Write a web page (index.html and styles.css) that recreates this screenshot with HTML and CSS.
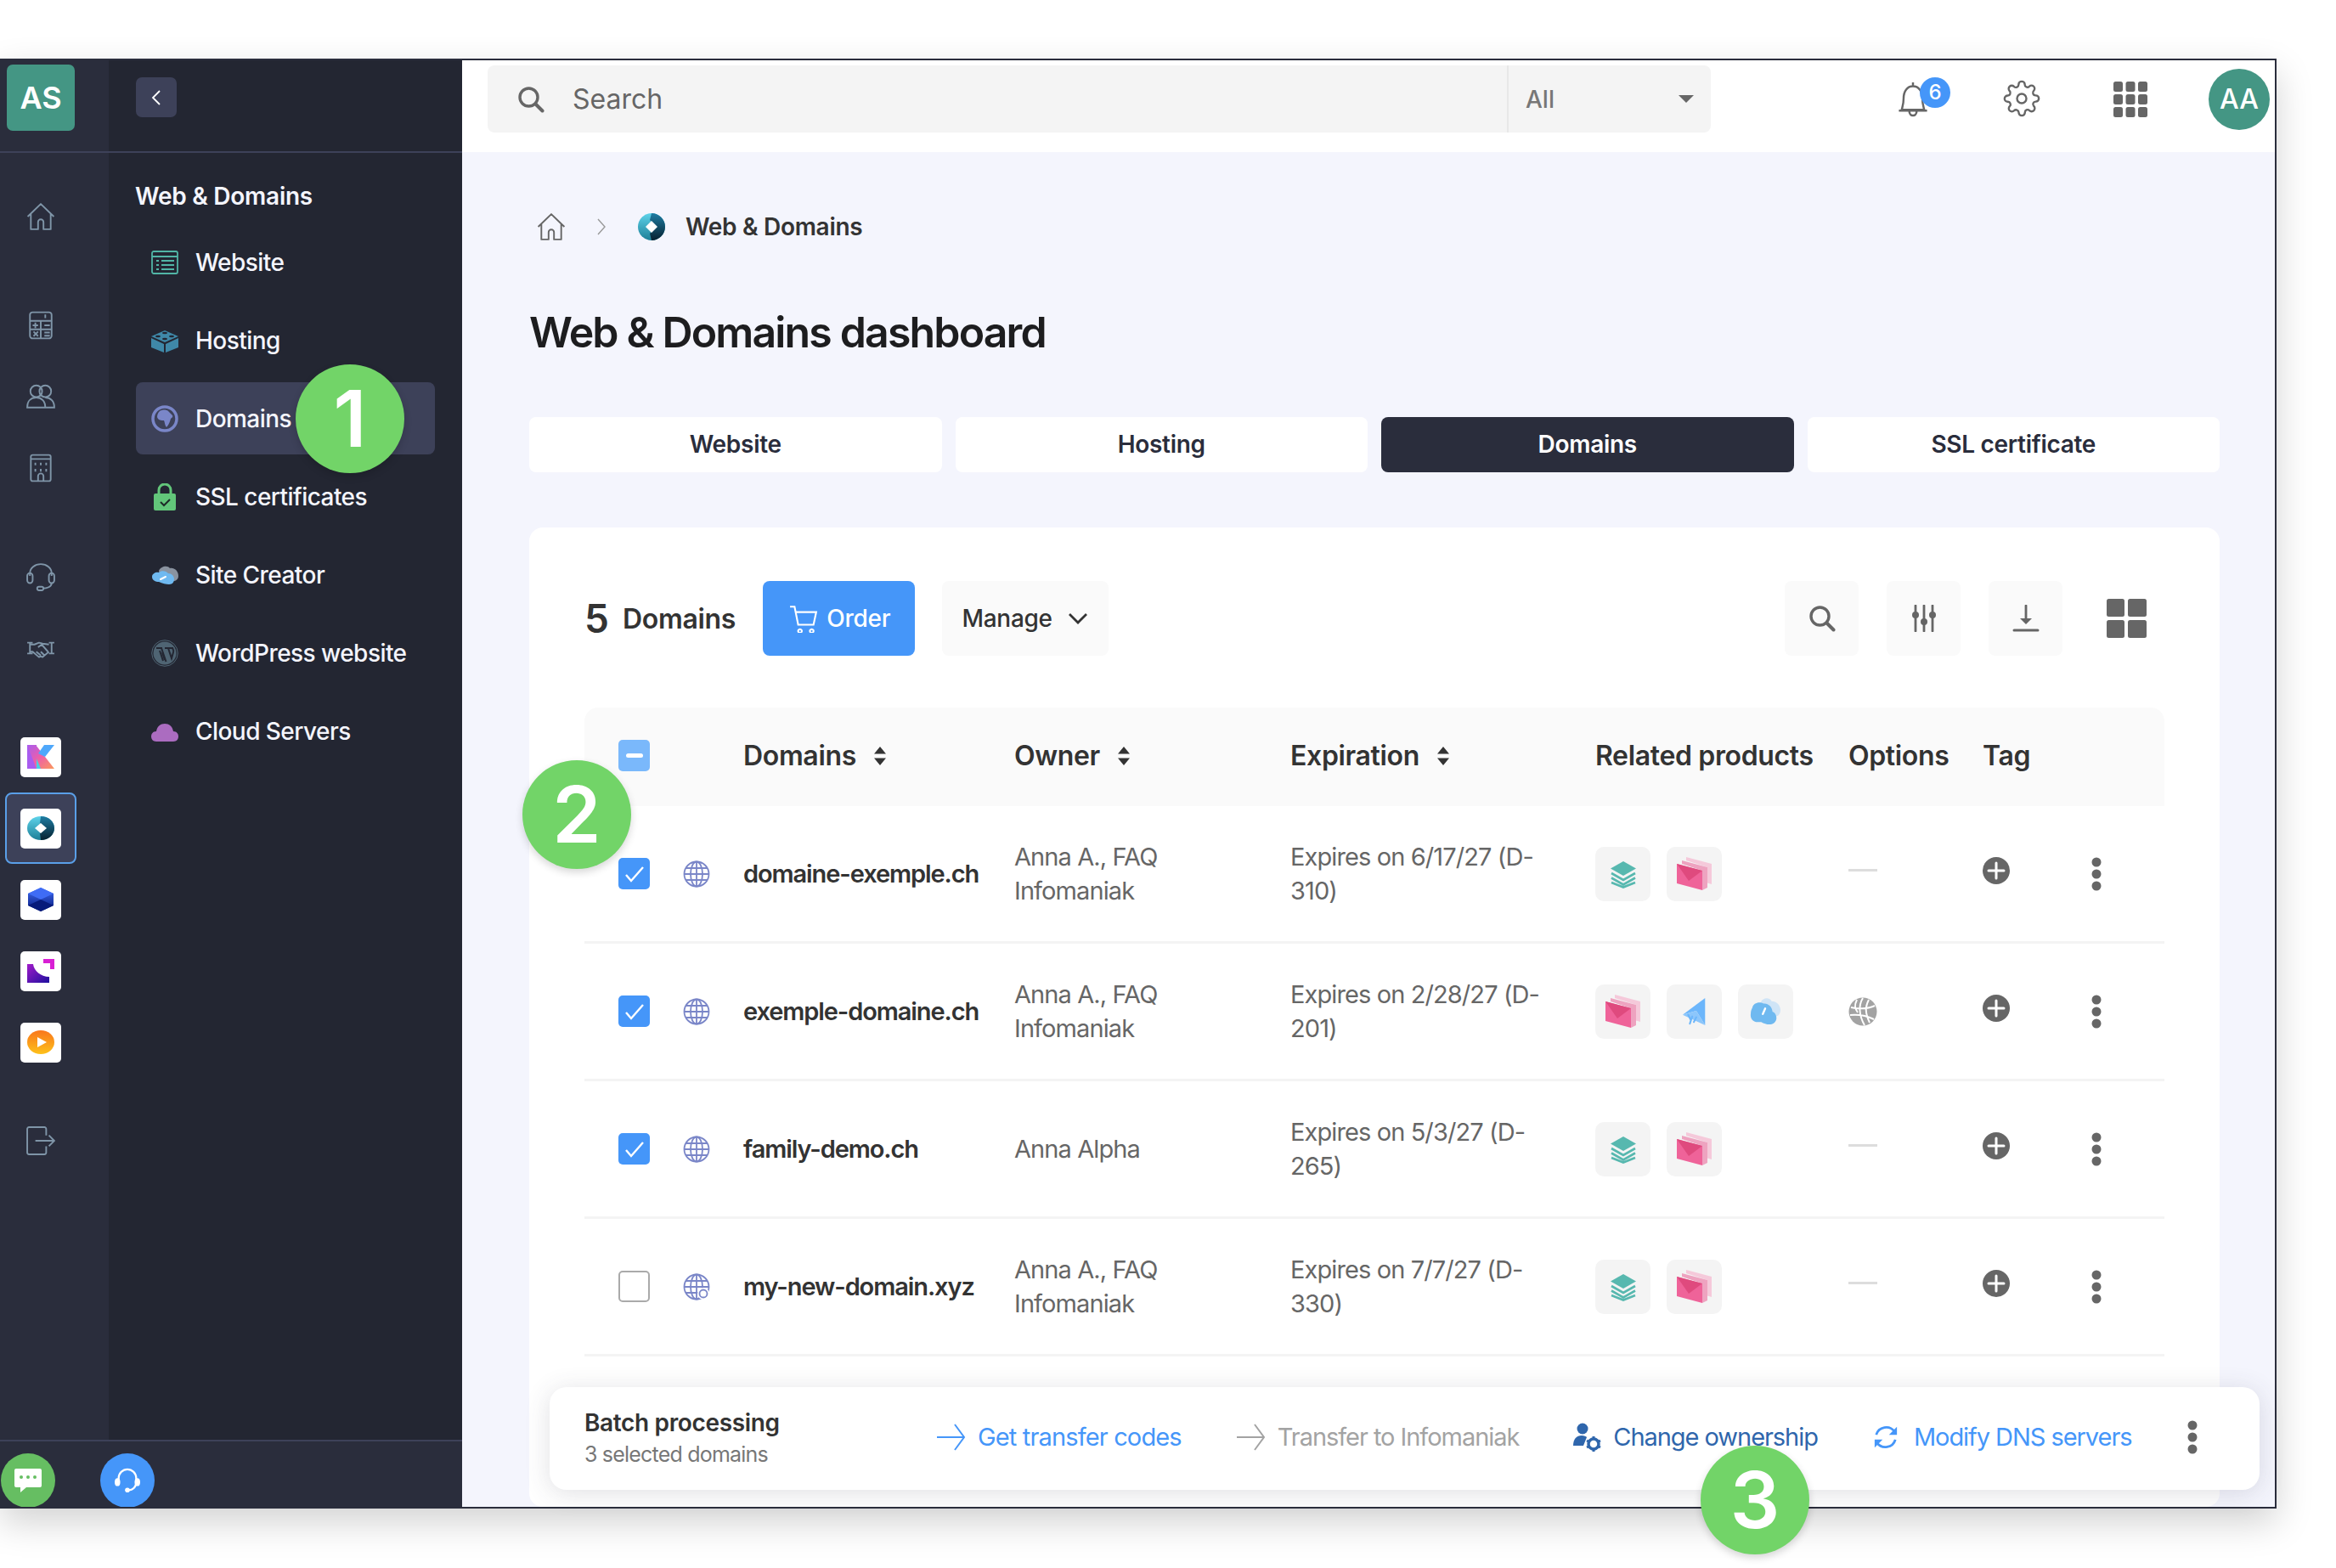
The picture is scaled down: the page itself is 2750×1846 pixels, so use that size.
FILE: index.html

```html
<!DOCTYPE html>
<html>
<head>
  <title>Web &amp; Domains dashboard</title>
  <link rel="stylesheet" href="styles.css">
</head>
<body>

<!-- shared icons -->
<svg class="defs">
  <defs>
    <linearGradient id="gWeb" x1="0" y1="0" x2="0" y2="1"><stop offset="0" stop-color="#5ed3ea"/><stop offset="1" stop-color="#1c7f97"/></linearGradient>
    <linearGradient id="gWebDark" x1="0" y1="0" x2="0" y2="1"><stop offset="0" stop-color="#1f7da3"/><stop offset="1" stop-color="#06202f"/></linearGradient>
    <linearGradient id="gKuma" x1="0" y1="0" x2="1" y2="1"><stop offset="0" stop-color="#a95cf0"/><stop offset=".5" stop-color="#ee5fa7"/><stop offset="1" stop-color="#fb9a5b"/></linearGradient>
    <linearGradient id="gCube" x1="0" y1="0" x2="0" y2="1"><stop offset="0" stop-color="#3f6cf5"/><stop offset="1" stop-color="#071a7a"/></linearGradient>
    <linearGradient id="gSwiss" x1="0" y1="0" x2="1" y2="1"><stop offset="0" stop-color="#a11bc9"/><stop offset="1" stop-color="#1d0f9e"/></linearGradient>
    <linearGradient id="gOrange" x1="0" y1="0" x2="0" y2="1"><stop offset="0" stop-color="#f9761c"/><stop offset="1" stop-color="#fdc11a"/></linearGradient>

    <symbol id="i-home" viewBox="0 0 32 32"><path d="M1.500 16 16 2l14.500 14M5 13v17h8v-8a3 3 0 0 1 6 0v8h8V13" fill="none" stroke="currentColor" stroke-width="1.800" stroke-linejoin="round"/></symbol>
    <symbol id="i-search" viewBox="0 0 32 32"><circle cx="13.500" cy="13.500" r="10.500" fill="none" stroke="currentColor" stroke-width="3.400"/><path d="m21.500 21.500 8 8" stroke="currentColor" stroke-width="4" stroke-linecap="round"/></symbol>
    <symbol id="i-globe" viewBox="0 0 32 32"><g fill="none" stroke="currentColor" stroke-width="1.800"><circle cx="16" cy="16" r="14.500"/><ellipse cx="16" cy="16" rx="7" ry="14.500"/><path d="M16 1.500v29M1.500 16h29M3.500 9h25M3.500 23h25"/></g></symbol>
    <symbol id="i-kebab" viewBox="0 0 12 40"><circle cx="6" cy="6" r="5.500"/><circle cx="6" cy="20" r="5.500"/><circle cx="6" cy="34" r="5.500"/></symbol>
    <symbol id="i-plus" viewBox="0 0 32 32"><circle cx="16" cy="16" r="16"/><path d="M16 7v18M7 16h18" stroke="#fff" stroke-width="3" stroke-linecap="round"/></symbol>
    <symbol id="i-sort" viewBox="0 0 16 24"><path d="M8 1l7 8.500H1zM8 23l-7-8.500h14z"/></symbol>
    <symbol id="i-arrow" viewBox="0 0 34 32"><path d="M0 16h32M21 1l11 15-11 15" fill="none" stroke="currentColor" stroke-width="2"/></symbol>
    <symbol id="i-stack" viewBox="0 0 32 32"><path d="M16 1l15 8.500-15 8.500-15-8.500z" fill="#57b8af"/><path d="M2 15l14 8 14-8M2 20.500l14 8 14-8M2 26l14 5.500L30 26" fill="none" stroke="#57b8af" stroke-width="2.600"/></symbol>
    <symbol id="i-pink" viewBox="0 0 41 39"><path d="M11 0l30 8v24l-5-1.500V12L11 4z" fill="#f5c9da"/><path d="M6 4l30 8v24l-6 3V16L6 8z" fill="#eea3c0"/><path d="M0 8l30 8v23L0 31z" fill="#ef6399"/><path d="M0 8l30 8-16 12z" fill="#df4a7e"/></symbol>
    <symbol id="i-send" viewBox="0 0 32 36"><path d="M29 1v34L18 17 1 22z" fill="#6cb6fb"/><path d="M1 22l17-5 11 18z" fill="#8cc6fb"/><path d="M8 22l3 6M13 24l-3 9M18 25l-3 6" stroke="#6cb6fb" stroke-width="2.200" stroke-linecap="round"/></symbol>
    <symbol id="i-cloud" viewBox="0 0 40 36"><path d="M14 5c3-5 11-5 13 0 6 0 11 5 11 11s-4 9-10 9H14z" fill="#cfe4f6"/><path d="M3 13c1-6 9-8 14-5 5-1 11 4 11 10 3 1 5 4 5 8s-3 8-9 8c-3 0-7-1-10-3H10C3 31 0 26 1 20c0-3 1-5 2-7z" fill="#6fb9f0"/><path d="M16 21l3-7" stroke="#fff" stroke-width="2.500" stroke-linecap="round"/></symbol>
  </defs>
</svg>

<div class="window">

  <aside class="sidebar">
    <div class="rail-head"><div class="as-tile">AS</div></div>
    <div class="panel-head">
      <button class="back-btn">
        <svg class="icon-chev" viewBox="0 0 12 20"><path d="M10 2 2 10l8 8" fill="none" stroke="#fff" stroke-width="1.800"/></svg>
      </button>
    </div>

    <nav class="rail">
      <a class="rail-item rail-home"><svg class="rail-icon"><use href="#i-home"/></svg></a>

      <a class="rail-item group-start">
        <svg class="rail-icon" viewBox="0 0 32 32"><g fill="none" stroke="currentColor" stroke-width="1.800"><rect x="4" y="1.500" width="24" height="29" rx="3"/><path d="M4 11h24M16 11v19.500M4 20.500h24M21 4v4M7 16h6M10 13v6M20 16h6M8 23l5 5M13 23l-5 5M20 24h6M20 27.500h6"/></g></svg>
      </a>
      <a class="rail-item">
        <svg class="rail-icon" viewBox="0 0 32 32"><g fill="none" stroke="currentColor" stroke-width="1.800"><circle cx="11" cy="10" r="6.500"/><circle cx="21" cy="10" r="6.500"/><path d="M1 28c0-7 4-11 10-11s10 4 10 11zM21 17c6 0 10 4 10 11h-10"/></g></svg>
      </a>
      <a class="rail-item">
        <svg class="rail-icon" viewBox="0 0 32 32"><g fill="none" stroke="currentColor" stroke-width="1.800"><rect x="5" y="1.500" width="22" height="29" rx="2"/><path d="M5 6h22M13 30.500V25a3 3 0 0 1 6 0v5.500M10 10v3M16 10v3M22 10v3M10 17v3M16 17v3M22 17v3"/></g></svg>
      </a>

      <a class="rail-item group-start">
        <svg class="rail-icon" viewBox="0 0 32 32"><g fill="none" stroke="currentColor" stroke-width="1.800"><path d="M4 15V12a12 10 0 0 1 24 0v3"/><rect x="1" y="12" width="6" height="11" rx="3"/><rect x="25" y="12" width="6" height="11" rx="3"/><path d="M28 23c0 4-5 6-10 6"/><rect x="12" y="27" width="7" height="4" rx="2"/></g></svg>
      </a>
      <a class="rail-item">
        <svg class="rail-icon" viewBox="0 0 32 32"><g fill="none" stroke="currentColor" stroke-width="1.800" stroke-linejoin="round"><path d="M1 10h6M1 22h6M4 10v12M25 10h6M25 22h6M28 10v12M4 12h5l5-2 4 1 7 1M4 20h3l7 6 2-1 2 1 7-6M13 15l4-3 7 8M16 24l-5-4M20 24l-4-4"/></g></svg>
      </a>

      <a class="rail-item group-start">
        <span class="app-tile">
          <svg class="app-logo" viewBox="0 0 32 28"><path d="M0 0h11v28H0z" fill="#a95cf0"/><path d="M0 0l10 0 22 28H11z" fill="url(#gKuma)"/><path d="M13 10 20 0h12L21 14z" fill="#4fa8fb"/><path d="M11 16l5 12h-5z" fill="#49d0e2"/></svg>
        </span>
      </a>
      <a class="rail-item is-active">
        <span class="app-tile">
          <svg class="app-logo" viewBox="0 0 32 28"><ellipse cx="16" cy="14" rx="16" ry="14" fill="url(#gWeb)"/><path d="M16 0c9 0 16 6 16 14s-7 14-16 14l-1-8 6-6-6-6z" fill="url(#gWebDark)"/><path d="M16 8l7 6-7 6-7-6z" fill="#fff"/></svg>
        </span>
      </a>
      <a class="rail-item">
        <span class="app-tile">
          <svg class="app-logo" viewBox="0 0 32 28"><path d="M16 0l15 7v14l-15 7-15-7V7z" fill="url(#gCube)"/><path d="M16 14 1 7l15-7 15 7z" fill="#3f6cf5"/><path d="M16 14 1 21l15 7 15-7z" fill="#071a7a"/></svg>
        </span>
      </a>
      <a class="rail-item">
        <span class="app-tile">
          <svg class="app-logo" viewBox="0 0 32 28"><path d="M19 0h13v12h-5V5h-8z" fill="#d81fd4"/><path d="M0 6h7c1 8 9 15 19 15v7H0z" fill="url(#gSwiss)"/></svg>
        </span>
      </a>
      <a class="rail-item">
        <span class="app-tile">
          <svg class="app-logo" viewBox="0 0 32 28"><ellipse cx="16" cy="14" rx="16" ry="14" fill="url(#gOrange)"/><path d="M12 8l11 6-11 6z" fill="#fff"/></svg>
        </span>
      </a>

      <a class="rail-item rail-exit">
        <svg class="rail-icon" viewBox="0 0 32 32"><g fill="none" stroke="currentColor" stroke-width="1.800"><path d="M22 10V3a2 2 0 0 0-2-2H3a2 2 0 0 0-2 2v26a2 2 0 0 0 2 2h17a2 2 0 0 0 2-2v-7"/><path d="M10 16h21M25 10l6 6-6 6"/></g></svg>
      </a>
    </nav>

    <div class="panel">
      <div class="panel-title">Web &amp; Domains</div>
      <a class="panel-item">
        <svg class="panel-icon" viewBox="0 0 32 28"><g fill="none" stroke="#51b5a6" stroke-width="1.800"><rect x="1" y="1" width="30" height="26" rx="2"/><path d="M1 7h30M12 12h15M12 17h15M12 22h15M6 12h3M6 17h3M6 22h3"/></g></svg>
        <span>Website</span>
      </a>
      <a class="panel-item">
        <svg class="panel-icon" viewBox="0 0 32 28"><path d="M0 11l15 7v10L0 22zM32 11l-15 7v10l15-6z" fill="#3f88a8"/><path d="M0 9 16 2l16 7-16 7z" fill="#3f88a8"/><g fill="#232632"><ellipse cx="16" cy="5" rx="3" ry="1.300"/><ellipse cx="8" cy="9" rx="3" ry="1.300"/><ellipse cx="24" cy="9" rx="3" ry="1.300"/><ellipse cx="16" cy="12" rx="3" ry="1.300"/></g></svg>
        <span>Hosting</span>
      </a>
      <a class="panel-item is-active">
        <svg class="panel-icon" viewBox="0 0 32 32"><circle cx="16" cy="16" r="14" fill="none" stroke="#7a86c8" stroke-width="3.500"/><path d="M10 7c3-2 8-2 10 0l5 5c1 2-1 3-2 4-1 3-2 7-5 10-2-2-2-6-3-8-3 0-7 0-8-4 0-3 1-5 3-7z" fill="#7a86c8"/></svg>
        <span>Domains</span>
      </a>
      <a class="panel-item">
        <svg class="panel-icon panel-lock" viewBox="0 0 26 32"><path d="M6 14V8a7 7 0 0 1 14 0v6" fill="none" stroke="#62c67a" stroke-width="3"/><rect y="12" width="26" height="20" rx="2" fill="#62c67a"/><path d="M8 22l4 4 7-7" fill="none" stroke="#1d2b28" stroke-width="2"/></svg>
        <span>SSL certificates</span>
      </a>
      <a class="panel-item">
        <svg class="panel-icon" viewBox="0 0 32 24"><path d="M9 7c2-5 10-7 13-3 5-1 10 3 10 9 0 4-3 6-6 6H12z" fill="#8a93a0"/><path d="M1 14c0-4 5-6 8-5 3-3 9-2 11 1 4 0 7 3 7 7 0 3-2 6-6 6-3 0-8-1-12-3-4 0-8-2-8-6z" fill="#6fb9f0"/><path d="M11 17l6-3" stroke="#fff" stroke-width="2" stroke-linecap="round"/></svg>
        <span>Site Creator</span>
      </a>
      <a class="panel-item">
        <svg class="panel-icon" viewBox="0 0 32 32"><circle cx="16" cy="16" r="15.300" fill="none" stroke="#4f6473" stroke-width="1"/><circle cx="16" cy="16" r="13.500" fill="#4f6473"/><path d="M6 10h7M12 10l5.500 16M19 10h7M16 10h4M20 10l4 12 2-7c1-2 0-3-1-5M10 13l4 12M13 15l3 9" fill="none" stroke="#232632" stroke-width="2"/></svg>
        <span>WordPress website</span>
      </a>
      <a class="panel-item">
        <svg class="panel-icon" viewBox="0 0 32 24"><path d="M6 24c-4 0-6-3-6-6s2-6 6-6c1-6 5-9 10-9s9 3 10 9c4 0 6 3 6 6s-2 6-6 6z" fill="#ab6cc0"/></svg>
        <span>Cloud Servers</span>
      </a>
    </div>

    <div class="side-bottom">
      <span class="round-btn round-green">
        <svg viewBox="0 0 32 28" class="round-icon"><path d="M2 0h28a2 2 0 0 1 2 2v18a2 2 0 0 1-2 2H14L7 28v-6H2a2 2 0 0 1-2-2V2a2 2 0 0 1 2-2z" fill="#fff"/><g fill="#66be62"><circle cx="8" cy="10" r="2"/><circle cx="16" cy="10" r="2"/><circle cx="24" cy="10" r="2"/></g></svg>
      </span>
      <span class="round-btn round-blue">
        <svg viewBox="0 0 32 32" class="round-icon"><path d="M5 18V13a11 11 0 0 1 22 0v5M27 18c0 6-4 10-10 10" fill="none" stroke="#fff" stroke-width="2.400"/><ellipse cx="3.500" cy="18" rx="3.500" ry="5" fill="#fff"/><ellipse cx="28.500" cy="18" rx="3.500" ry="5" fill="#fff"/><circle cx="16" cy="28" r="3" fill="#fff"/></svg>
      </span>
    </div>
  </aside>

  <main class="main">
    <header class="topbar">
      <div class="searchbox">
        <div class="search-field">
          <svg class="search-icon"><use href="#i-search"/></svg>
          <span>Search</span>
        </div>
        <div class="search-scope">
          <span>All</span>
          <span class="caret"></span>
        </div>
      </div>
      <div class="top-icons">
        <span class="bell">
          <svg class="bell-icon" viewBox="0 0 32 38"><path d="M16 1v4M4 30c1-4 2-6 2-12 0-8 4-13 10-13s10 5 10 13c0 6 1 8 2 12zM1 31h30M12 31c0 7 8 7 8 0" fill="none" stroke="#666" stroke-width="2.200"/></svg>
          <span class="badge">6</span>
        </span>
        <svg class="gear" viewBox="0 0 24 24"><circle cx="12" cy="12" r="3" fill="none" stroke="#666" stroke-width="1.300"/><path fill="none" stroke="#666" stroke-width="1.300" d="M19.400 15a1.650 1.650 0 0 0 .33 1.820l.06.06a2 2 0 0 1 0 2.830 2 2 0 0 1-2.830 0l-.06-.06a1.650 1.650 0 0 0-1.820-.33 1.650 1.650 0 0 0-1 1.510V21a2 2 0 0 1-2 2 2 2 0 0 1-2-2v-.09A1.650 1.650 0 0 0 9 19.400a1.650 1.650 0 0 0-1.820.33l-.06.06a2 2 0 0 1-2.830 0 2 2 0 0 1 0-2.830l.06-.06a1.650 1.650 0 0 0 .33-1.820 1.650 1.650 0 0 0-1.510-1H3a2 2 0 0 1-2-2 2 2 0 0 1 2-2h.09A1.650 1.650 0 0 0 4.600 9a1.650 1.650 0 0 0-.33-1.820l-.06-.06a2 2 0 0 1 0-2.830 2 2 0 0 1 2.830 0l.06.06a1.650 1.650 0 0 0 1.820.33H9a1.650 1.650 0 0 0 1-1.510V3a2 2 0 0 1 2-2 2 2 0 0 1 2 2v.09a1.650 1.650 0 0 0 1 1.510 1.650 1.650 0 0 0 1.820-.33l.06-.06a2 2 0 0 1 2.830 0 2 2 0 0 1 0 2.830l-.06.06a1.650 1.650 0 0 0-.33 1.820V9a1.650 1.650 0 0 0 1.510 1H21a2 2 0 0 1 2 2 2 2 0 0 1-2 2h-.09a1.650 1.650 0 0 0-1.510 1z"/></svg>
        <svg class="apps" viewBox="0 0 40 42"><g fill="#666"><rect width="11" height="12" rx="2.500"/><rect x="14.500" width="11" height="12" rx="2.500"/><rect x="29" width="11" height="12" rx="2.500"/><rect y="15" width="11" height="12" rx="2.500"/><rect x="14.500" y="15" width="11" height="12" rx="2.500"/><rect x="29" y="15" width="11" height="12" rx="2.500"/><rect y="30" width="11" height="12" rx="2.500"/><rect x="14.500" y="30" width="11" height="12" rx="2.500"/><rect x="29" y="30" width="11" height="12" rx="2.500"/></g></svg>
        <span class="avatar">AA</span>
      </div>
    </header>

    <section class="content">
      <div class="crumbs">
        <svg class="crumb-home"><use href="#i-home"/></svg>
        <svg class="crumb-sep" viewBox="0 0 10 20"><path d="M1 1l8 9-8 9" fill="none" stroke="#999" stroke-width="1.400"/></svg>
        <svg class="crumb-logo" viewBox="0 0 32 32"><circle cx="16" cy="16" r="16" fill="url(#gWeb)"/><path d="M16 0a16 16 0 0 1 0 32l-2-8 8-8-8-8z" fill="url(#gWebDark)"/><path d="M16 9l7 7-7 7-7-7z" fill="#fff"/></svg>
        <span class="crumb-text">Web &amp; Domains</span>
      </div>

      <h1 class="page-title">Web &amp; Domains dashboard</h1>

      <div class="tabs">
        <a class="tab">Website</a>
        <a class="tab">Hosting</a>
        <a class="tab is-active">Domains</a>
        <a class="tab">SSL certificate</a>
      </div>

      <div class="card">
        <div class="toolbar">
          <span class="count">5</span>
          <span class="count-label">Domains</span>
          <button class="btn-order">
            <svg class="cart" viewBox="0 0 32 32"><path d="M1 3h5l4 20h17l3-14H7M12 28a2 2 0 1 0 .01 0M25 28a2 2 0 1 0 .01 0" fill="none" stroke="#fff" stroke-width="2"/></svg>
            Order
          </button>
          <button class="btn-manage">
            Manage
            <svg class="manage-chev" viewBox="0 0 24 14"><path d="M2 2l10 10L22 2" fill="none" stroke="#333" stroke-width="2.800"/></svg>
          </button>
          <div class="tool-group">
            <span class="tool"><svg class="tool-icon"><use href="#i-search"/></svg></span>
            <span class="tool">
              <svg class="tool-icon" viewBox="0 0 32 32"><path d="M6 1v30M16 1v30M26 1v30" stroke="#666" stroke-width="2.800" stroke-linecap="round"/><circle cx="6" cy="12" r="4" fill="#666"/><circle cx="16" cy="20" r="4" fill="#666"/><circle cx="26" cy="12" r="4" fill="#666"/></svg>
            </span>
            <span class="tool">
              <svg class="tool-icon" viewBox="0 0 32 32"><path d="M16 1v16" stroke="#666" stroke-width="2.800" stroke-linecap="round"/><path d="M9 16h14l-7 7z" fill="#666"/><path d="M2 30h28" stroke="#666" stroke-width="3" stroke-linecap="round"/></svg>
            </span>
            <svg class="view-grid" viewBox="0 0 47 46"><g fill="#666"><rect width="21" height="21" rx="2.500"/><rect x="25" width="22" height="21" rx="2.500"/><rect y="25" width="21" height="21" rx="2.500"/><rect x="25" y="25" width="22" height="21" rx="2.500"/></g></svg>
          </div>
        </div>

        <div class="row row-head">
          <span class="check is-mixed"></span>
          <span></span>
          <span class="th">Domains <svg class="sort"><use href="#i-sort"/></svg></span>
          <span class="th">Owner <svg class="sort"><use href="#i-sort"/></svg></span>
          <span class="th">Expiration <svg class="sort"><use href="#i-sort"/></svg></span>
          <span class="th">Related products</span>
          <span class="th">Options</span>
          <span class="th">Tag</span>
          <span></span>
        </div>

        <div class="row">
          <span class="check is-on"><svg class="tick" viewBox="0 0 24 20"><path d="M2 11l6 7L22 2" fill="none" stroke="#fff" stroke-width="2.400"/></svg></span>
          <svg class="row-globe"><use href="#i-globe"/></svg>
          <span class="domain">domaine-exemple.ch</span>
          <span class="cell">Anna A., FAQ<br>Infomaniak</span>
          <span class="cell expires">Expires on 6/17/27 (D-310)</span>
          <span class="products">
            <span class="tile"><svg class="tile-icon"><use href="#i-stack"/></svg></span>
            <span class="tile"><svg class="tile-pink"><use href="#i-pink"/></svg></span>
          </span>
          <span class="dash"></span>
          <svg class="plus"><use href="#i-plus"/></svg>
          <svg class="kebab"><use href="#i-kebab"/></svg>
        </div>

        <div class="row">
          <span class="check is-on"><svg class="tick" viewBox="0 0 24 20"><path d="M2 11l6 7L22 2" fill="none" stroke="#fff" stroke-width="2.400"/></svg></span>
          <svg class="row-globe"><use href="#i-globe"/></svg>
          <span class="domain">exemple-domaine.ch</span>
          <span class="cell">Anna A., FAQ<br>Infomaniak</span>
          <span class="cell expires">Expires on 2/28/27 (D-201)</span>
          <span class="products">
            <span class="tile"><svg class="tile-pink"><use href="#i-pink"/></svg></span>
            <span class="tile"><svg class="tile-icon"><use href="#i-send"/></svg></span>
            <span class="tile"><svg class="tile-cloud"><use href="#i-cloud"/></svg></span>
          </span>
          <svg class="option-globe" viewBox="0 0 34 34"><circle cx="17" cy="17" r="16.500" fill="#a3a3a3"/><path d="M3 12c8 2 20 2 28-2M2 21c10-1 20 1 28 5M17 1c-5 8-5 20 2 32M24 3c-4 8-5 14 1 27M10 3c-3 6-3 10 1 15" fill="none" stroke="#fff" stroke-width="2"/></svg>
          <svg class="plus"><use href="#i-plus"/></svg>
          <svg class="kebab"><use href="#i-kebab"/></svg>
        </div>

        <div class="row">
          <span class="check is-on"><svg class="tick" viewBox="0 0 24 20"><path d="M2 11l6 7L22 2" fill="none" stroke="#fff" stroke-width="2.400"/></svg></span>
          <svg class="row-globe"><use href="#i-globe"/></svg>
          <span class="domain">family-demo.ch</span>
          <span class="cell">Anna Alpha</span>
          <span class="cell expires">Expires on 5/3/27 (D-265)</span>
          <span class="products">
            <span class="tile"><svg class="tile-icon"><use href="#i-stack"/></svg></span>
            <span class="tile"><svg class="tile-pink"><use href="#i-pink"/></svg></span>
          </span>
          <span class="dash"></span>
          <svg class="plus"><use href="#i-plus"/></svg>
          <svg class="kebab"><use href="#i-kebab"/></svg>
        </div>

        <div class="row">
          <span class="check"></span>
          <svg class="row-globe" viewBox="0 0 32 32"><use href="#i-globe" width="32" height="32"/><circle cx="24" cy="24" r="7" fill="#fff"/><circle cx="24" cy="24" r="4.500" fill="none" stroke="currentColor" stroke-width="1.800"/></svg>
          <span class="domain">my-new-domain.xyz</span>
          <span class="cell">Anna A., FAQ<br>Infomaniak</span>
          <span class="cell expires">Expires on 7/7/27 (D-330)</span>
          <span class="products">
            <span class="tile"><svg class="tile-icon"><use href="#i-stack"/></svg></span>
            <span class="tile"><svg class="tile-pink"><use href="#i-pink"/></svg></span>
          </span>
          <span class="dash"></span>
          <svg class="plus"><use href="#i-plus"/></svg>
          <svg class="kebab"><use href="#i-kebab"/></svg>
        </div>
      </div>
    </section>
  </main>

  <!-- floating batch bar -->
  <div class="batch">
    <div class="batch-info">
      <div class="batch-title">Batch processing</div>
      <div class="batch-sub">3 selected domains</div>
    </div>
    <a class="batch-link link-blue"><svg class="batch-arrow"><use href="#i-arrow"/></svg>Get transfer codes</a>
    <a class="batch-link link-grey"><svg class="batch-arrow"><use href="#i-arrow"/></svg>Transfer to Infomaniak</a>
    <a class="batch-link link-dark">
      <svg class="batch-icon" viewBox="0 0 34 34"><circle cx="12" cy="7" r="6.500" fill="currentColor"/><path d="M1 27c0-8 4-12 10-12 3 0 5 1 6 2l-4 10z" fill="currentColor"/><circle cx="25" cy="25" r="6" fill="none" stroke="currentColor" stroke-width="3.500"/><path d="M25 16v3M25 31v3M17 21l3 1.500M30 27.500l3 1.500M17 29l3-1.500M30 22.500l3-1.500" stroke="currentColor" stroke-width="3"/></svg>
      Change ownership
    </a>
    <a class="batch-link link-blue">
      <svg class="batch-icon batch-refresh" viewBox="0 0 32 32"><path d="M4 13a13 13 0 0 1 23-4M28 19a13 13 0 0 1-23 4" fill="none" stroke="currentColor" stroke-width="3"/><path d="M30 3v10H20zM2 29V19h10z" fill="currentColor"/></svg>
      Modify DNS servers
    </a>
    <svg class="batch-kebab"><use href="#i-kebab"/></svg>
  </div>

  <!-- numbered callouts drawn over the shot -->
  <div class="callout callout-1">1</div>
  <div class="callout callout-2">2</div>
  <div class="callout callout-3">3</div>
</div>

</body>
</html>
```

FILE: styles.css

```css
* {
  box-sizing: border-box;
}
body {
  margin: 0;
  width: 2750px;
  height: 1846px;
  overflow: hidden;
  background: #fff;
  font-family: Inter, "Liberation Sans", sans-serif;
  color: #333;
}
svg {
  display: block;
  flex: none;
}
button {
  font-family: inherit;
  border: 0;
}
.defs {
  width: 0;
  height: 0;
}

.window {
  position: relative;
  display: flex;
  width: 2680px;
  height: 1707px;
  margin-top: 69px;
  border: 2px solid #2a2d3c;
  border-left: 0;
  background: #f4f5fd;
  box-shadow: 0 16px 40px rgba(0, 0, 0, 0.18);
}

/* sidebar */
.sidebar {
  display: grid;
  grid-template-columns: 128px 1fr;
  grid-template-rows: 109px 1fr 79px;
  width: 544px;
  flex: none;
  overflow: hidden;
  background: #232632;
}
.rail-head, .panel-head {
  border-bottom: 2px solid #3d4159;
}
.rail-head {
  background: #2a2d3c;
  padding: 5px 0 0 8px;
}
.as-tile {
  width: 80px;
  height: 78px;
  border-radius: 7px;
  background: #449684;
  color: #fff;
  font-size: 36px;
  font-weight: 600;
  line-height: 78px;
  text-align: center;
}
.panel-head {
  padding: 20px 0 0 32px;
}
.back-btn {
  display: flex;
  align-items: center;
  justify-content: center;
  width: 48px;
  height: 47px;
  border-radius: 7px;
  background: #3d4159;
}
.icon-chev {
  width: 12px;
  height: 20px;
}

.rail {
  display: flex;
  flex-direction: column;
  align-items: flex-start;
  padding: 33px 0 0 6px;
  background: #2a2d3c;
  color: #7f95a8;
}
.rail-item {
  display: flex;
  align-items: center;
  justify-content: center;
  width: 84px;
  height: 84px;
  flex: none;
  border-radius: 8px;
}
.rail-item.group-start {
  margin-top: 44px;
}
.rail-exit {
  margin-top: 32px;
}
.rail-item.is-active {
  background: #3d4159;
  border: 2px solid #5a9fe8;
}
.rail-icon {
  width: 34px;
  height: 34px;
}
.app-tile {
  display: flex;
  align-items: center;
  justify-content: center;
  width: 48px;
  height: 47px;
  border-radius: 5px;
  background: #fff;
}
.app-logo {
  width: 32px;
  height: 28px;
}

.panel {
  display: flex;
  flex-direction: column;
  gap: 7.1px;
  padding: 31px 32px 0 31px;
}
.panel-title {
  height: 48px;
  color: #f4f5fd;
  font-size: 28px;
  font-weight: 600;
  line-height: 40px;
  letter-spacing: -0.25px;
}
.panel-item {
  display: flex;
  align-items: center;
  gap: 20px;
  height: 85px;
  margin-left: 1px;
  padding-left: 18px;
  border-radius: 8px;
  color: #f4f5fd;
  font-size: 28px;
  font-weight: 500;
  letter-spacing: -0.55px;
}
.panel-item.is-active {
  background: #3d4159;
}
.panel-icon {
  width: 32px;
  height: 32px;
}

.side-bottom {
  grid-column: 1 / 3;
  display: flex;
  gap: 53px;
  padding: 14px 0 0 1px;
  background: #2a2d3c;
  border-top: 2px solid #3d4159;
}
.round-btn {
  display: flex;
  align-items: center;
  justify-content: center;
  width: 64px;
  height: 64px;
  border-radius: 50%;
}
.round-green {
  background: #66be62;
}
.round-blue {
  background: #4596f9;
}
.round-icon {
  width: 32px;
  height: 30px;
}

/* top bar */
.main {
  display: flex;
  flex-direction: column;
  flex: 1;
  min-width: 0;
  overflow: hidden;
}
.topbar {
  display: flex;
  height: 108px;
  flex: none;
  padding: 6px 6px 0 30px;
  background: #fff;
}
.searchbox {
  display: flex;
  width: 1440px;
  height: 79px;
  border-radius: 8px;
  background: #f4f4f4;
  color: #666;
  font-size: 32px;
}
.search-field {
  display: flex;
  align-items: center;
  gap: 33px;
  width: 1202px;
  padding-left: 35px;
  border-right: 2px solid #e8e8e8;
}
.search-icon {
  width: 32px;
  height: 32px;
}
.search-scope {
  display: flex;
  align-items: center;
  justify-content: space-between;
  flex: 1;
  padding: 0 20px;
  font-size: 28px;
  font-weight: 500;
  color: #777;
}
.caret {
  width: 0;
  height: 0;
  border: 9px solid transparent;
  border-top: 9px solid #666;
  border-bottom: 0;
}
.top-icons {
  display: grid;
  grid-template-columns: 128px 128px 128px 100px;
  justify-items: center;
  align-items: center;
  height: 79px;
  margin-left: auto;
}
.bell {
  position: relative;
  display: block;
}
.bell-icon {
  width: 36px;
  height: 42px;
}
.badge {
  position: absolute;
  top: -5px;
  left: 26px;
  width: 36px;
  height: 36px;
  border-radius: 50%;
  background: #4596f9;
  color: #fff;
  font-size: 24px;
  font-weight: 500;
  line-height: 36px;
  text-align: center;
}
.gear {
  width: 44px;
  height: 44px;
  margin-top: -2px;
}
.apps {
  width: 40px;
  height: 42px;
}
.avatar {
  justify-self: end;
  width: 72px;
  height: 72px;
  border-radius: 50%;
  background: #449684;
  color: #fff;
  font-size: 32px;
  font-weight: 500;
  line-height: 72px;
  text-align: center;
}

/* content */
.content {
  display: flex;
  flex-direction: column;
  flex: 1;
  min-height: 0;
  padding: 68px 65px 0 79px;
}
.crumbs {
  display: flex;
  align-items: center;
  height: 40px;
}
.crumb-home {
  width: 34px;
  height: 34px;
  margin-left: 9px;
  color: #666;
}
.crumb-sep {
  width: 10px;
  height: 20px;
  margin-left: 37px;
}
.crumb-logo {
  width: 32px;
  height: 32px;
  margin-left: 38px;
}
.crumb-text {
  margin-left: 24px;
  color: #333;
  font-size: 28px;
  font-weight: 600;
  letter-spacing: -0.3px;
}
.page-title {
  height: 64px;
  margin: 72px 0 0;
  color: #1d1d1f;
  font-size: 50px;
  font-weight: 600;
  line-height: 64px;
  letter-spacing: -1.85px;
}
.tabs {
  display: grid;
  grid-template-columns: repeat(4, 1fr);
  gap: 16px;
  margin-top: 68px;
}
.tab {
  height: 65px;
  border-radius: 8px;
  background: #fff;
  color: #2a2d3c;
  font-size: 28px;
  font-weight: 600;
  line-height: 65px;
  letter-spacing: -0.3px;
  text-align: center;
}
.tab.is-active {
  background: #2a2d3c;
  color: #fff;
}

.card {
  flex: 1;
  margin-top: 65px;
  padding: 63px 65px 0;
  border-radius: 16px;
  background: #fff;
}
.toolbar {
  display: flex;
  align-items: center;
  height: 88px;
  margin-bottom: 61px;
}
.count {
  font-size: 46px;
  font-weight: 600;
  margin-right: 16px;
}
.count-label {
  font-size: 32px;
  font-weight: 600;
  letter-spacing: -0.3px;
  margin-right: 32px;
}
.btn-order {
  display: flex;
  align-items: center;
  gap: 10px;
  height: 88px;
  padding: 0 28px 0 31px;
  border-radius: 8px;
  background: #4596f9;
  color: #fff;
  font-size: 28px;
  font-weight: 500;
  letter-spacing: -0.2px;
  margin-right: 32px;
}
.cart {
  width: 34px;
  height: 34px;
}
.btn-manage {
  display: flex;
  align-items: center;
  gap: 18px;
  height: 88px;
  padding: 0 24px;
  border-radius: 8px;
  background: #fafafa;
  color: #333;
  font-size: 28px;
  font-weight: 500;
  letter-spacing: -0.3px;
}
.manage-chev {
  width: 24px;
  height: 14px;
}
.tool-group {
  display: flex;
  align-items: center;
  gap: 33px;
  margin-left: auto;
  padding-right: 21px;
  color: #666;
}
.tool {
  display: flex;
  align-items: center;
  justify-content: center;
  width: 87px;
  height: 88px;
  border-radius: 8px;
  background: #fafafa;
}
.tool-icon {
  width: 32px;
  height: 32px;
}
.view-grid {
  width: 47px;
  height: 46px;
  margin-left: 19px;
}

/* table rows */
.row {
  display: grid;
  grid-template-columns: 76px 71px 319px 325px 359px 298px 158px 128px 1fr;
  align-items: center;
  height: 162px;
  padding-left: 40px;
  border-bottom: 3px solid #f4f4f4;
}
.row-head {
  height: 116px;
  padding-bottom: 3px;
  border: 0;
  border-radius: 16px 16px 0 0;
  background: #fafafa;
}
.th {
  display: flex;
  align-items: center;
  gap: 20px;
  color: #333;
  font-size: 32px;
  font-weight: 600;
  letter-spacing: -0.35px;
}
.sort {
  width: 16px;
  height: 24px;
  fill: #333;
}
.check {
  display: flex;
  align-items: center;
  justify-content: center;
  width: 37px;
  height: 37px;
  border: 2px solid #aaa;
  border-radius: 5px;
  background: #fff;
}
.check.is-on {
  border: 0;
  background: #4596f9;
}
.check.is-mixed {
  border: 0;
  background: #7ab8fb;
}
.check.is-mixed::before {
  content: "";
  width: 20px;
  height: 5px;
  border-radius: 3px;
  background: #fff;
}
.tick {
  width: 24px;
  height: 20px;
}
.row-globe {
  width: 32px;
  height: 32px;
  color: #7a86c8;
}
.domain {
  color: #333;
  font-size: 29px;
  font-weight: 600;
  letter-spacing: -1.1px;
}
.cell {
  color: #666;
  font-size: 29px;
  line-height: 40px;
  letter-spacing: -0.9px;
}
.expires {
  max-width: 320px;
}
.products {
  display: flex;
  gap: 19px;
}
.tile {
  display: flex;
  align-items: center;
  justify-content: center;
  width: 65px;
  height: 64px;
  border-radius: 10px;
  background: #f4f4f4;
}
.tile-icon {
  width: 32px;
  height: 34px;
}
.tile-pink {
  width: 41px;
  height: 39px;
}
.tile-cloud {
  width: 40px;
  height: 34px;
}
.dash {
  width: 34px;
  height: 3px;
  margin-top: -8px;
  background: #ddd;
}
.option-globe {
  width: 34px;
  height: 34px;
}
.plus {
  width: 32px;
  height: 32px;
  margin-top: -8px;
  fill: #666;
}
.kebab {
  width: 12px;
  height: 40px;
  fill: #666;
}

/* batch bar */
.batch {
  position: absolute;
  left: 647px;
  top: 1562px;
  display: flex;
  align-items: center;
  width: 2013px;
  height: 121px;
  padding: 0 0 0 41px;
  border-radius: 20px;
  background: #fff;
  box-shadow: 0 4px 30px rgba(60, 60, 80, 0.16);
}
.batch-info {
  width: 415px;
  flex: none;
  margin-top: -3px;
}
.batch-title {
  color: #333;
  font-size: 28px;
  font-weight: 600;
  line-height: 40px;
  letter-spacing: -0.35px;
}
.batch-sub {
  color: #777;
  font-size: 25px;
  line-height: 34px;
  letter-spacing: -0.8px;
}
.batch-link {
  display: flex;
  align-items: center;
  gap: 14px;
  flex: none;
  margin-top: -4px;
  font-size: 29px;
  letter-spacing: -1.05px;
  white-space: nowrap;
}
.link-blue {
  color: #4596f9;
}
.link-grey {
  color: #a3a3a3;
}
.link-dark {
  color: #2f66ac;
}
.batch-arrow {
  width: 34px;
  height: 32px;
}
.batch-icon {
  width: 34px;
  height: 34px;
}
.batch-refresh {
  width: 30px;
  height: 30px;
  margin-right: 4px;
}
.batch-link:nth-child(2) {
  margin-right: 65px;
  letter-spacing: -0.85px;
}
.batch-link:nth-child(3) {
  margin-right: 63px;
}
.batch-link:nth-child(4) {
  margin-right: 65px;
}
.batch-kebab {
  width: 12px;
  height: 40px;
  margin-left: 65px;
  margin-top: -4px;
  fill: #666;
}

/* numbered markers */
.callout {
  position: absolute;
  width: 128px;
  height: 128px;
  border-radius: 50%;
  background: #72d468;
  box-shadow: 0 4px 10px rgba(0, 0, 0, 0.16);
  color: #fff;
  font-size: 92px;
  font-weight: 600;
  line-height: 128px;
  text-align: center;
}
.callout-1 {
  left: 348px;
  top: 358px;
}
.callout-2 {
  left: 615px;
  top: 824px;
}
.callout-3 {
  left: 2002px;
  top: 1631px;
}
```
